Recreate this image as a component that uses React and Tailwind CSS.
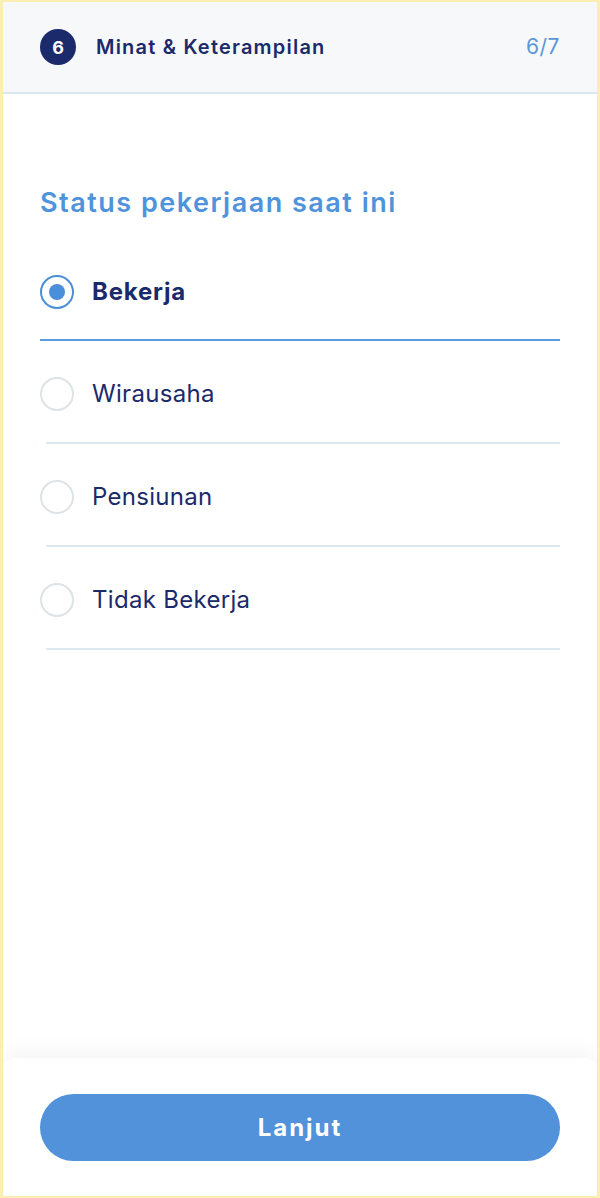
export default function App() {
  const options = ["Bekerja", "Wirausaha", "Pensiunan", "Tidak Bekerja"];
  return (
    <div
      className="w-[600px] h-[1198px] bg-white border-x-[3px] border-t-[2px] border-b-[2px] border-[#fbeeb3] flex flex-col overflow-hidden"
      style={{ fontFamily: "Inter, 'Noto Sans', sans-serif" }}
    >
      <div className="h-[92px] shrink-0 bg-[#f7f8fa] border-b-2 border-[#dbe8ef] flex items-center pl-[37px] pr-[37px]">
        <div className="w-[36px] h-[36px] rounded-full bg-[#1b2a6b] flex items-center justify-center text-white text-[18px] font-bold">
          6
        </div>
        <div className="ml-[20px] text-[20px] font-semibold text-[#1b2a6b] tracking-[1.2px]">
          Minat &amp; Keterampilan
        </div>
        <div className="ml-auto text-[21px] text-[#5b96d6] tracking-[0.5px]">6/7</div>
      </div>

      <div className="flex-1 flex flex-col px-[37px] pt-[93px]">
        <div className="text-[27px] font-semibold text-[#4f93dc] leading-[32px] tracking-[1.5px]">
          Status pekerjaan saat ini
        </div>
        <div className="mt-[20px] flex flex-col">
          {options.map((o, i) => {
            const sel = i === 0;
            return (
              <div key={o} className="flex flex-col">
                <div className={sel ? "pt-[36px] pb-[30px] flex items-center" : "pt-[36px] pb-[31px] flex items-center"}>
                  <div
                    className={
                      sel
                        ? "w-[34px] h-[34px] rounded-full border-2 border-[#4a8fd9] flex items-center justify-center"
                        : "w-[34px] h-[34px] rounded-full border-2 border-[#dde3e6]"
                    }
                  >
                    {sel && <div className="w-[16px] h-[16px] rounded-full bg-[#4a8fd9]" />}
                  </div>
                  <div
                    className={
                      sel
                        ? "ml-[18px] text-[24px] leading-[34px] font-bold text-[#1b2a6b] tracking-[0.8px]"
                        : "ml-[18px] text-[24px] leading-[34px] font-normal text-[#1b2a6b] tracking-[0.3px]"
                    }
                  >
                    {o}
                  </div>
                </div>
                <div
                  className={
                    sel
                      ? "h-[2px] bg-[#5b9be0] ml-0"
                      : "h-[2px] bg-[#dbe8f1] ml-[6px]"
                  }
                />
              </div>
            );
          })}
        </div>
      </div>

      <div className="shrink-0 h-[138px] bg-white rounded-t-[10px] shadow-[0_-8px_20px_rgba(0,0,0,0.04)] px-[37px] pt-[36px]">
        <button className="w-full h-[67px] rounded-full bg-[#5192da] text-white text-[24px] font-bold tracking-[2px]">
          Lanjut
        </button>
      </div>
    </div>
  );
}
